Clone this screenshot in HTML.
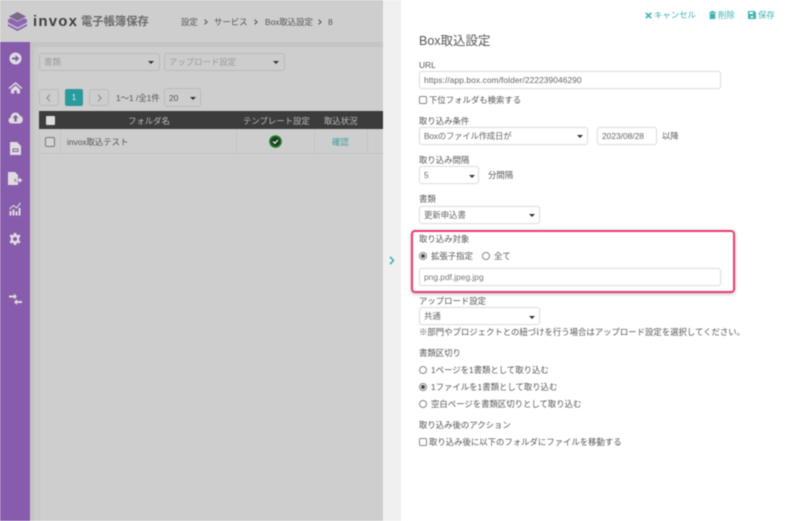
<!DOCTYPE html>
<html lang="ja"><head><meta charset="utf-8"><title>Box取込設定</title>
<style>
*{box-sizing:border-box}
html,body{margin:0;padding:0;width:800px;height:521px;overflow:hidden;background:#fff}
body{font-family:"Liberation Sans","Noto Sans CJK JP",sans-serif;color:#555;font-size:8.4px;position:relative}
#w{position:absolute;left:0;top:0;width:800px;height:521px;filter:blur(.4px);overflow:hidden}
.a{position:absolute}
.t{position:absolute;line-height:12px;white-space:nowrap}
.b{position:absolute;background:#fff;border:1px solid #e0e0e0;border-radius:3px;box-shadow:0 0 1px #ddd;line-height:16px;padding-left:4px;font-size:8.4px;white-space:nowrap}
.g{background:#cdcdcd;border-color:#bababa;box-shadow:none;color:#9a9a9a}
.c{position:absolute;width:0;height:0;border-left:3px solid transparent;border-right:3px solid transparent;border-top:3px solid #333}
.r{position:absolute;width:8px;height:8px;border:1px solid #888;border-radius:50%;background:#fff}
.r.on::after{content:"";position:absolute;left:1px;top:1px;width:4px;height:4px;border-radius:50%;background:#444}
.k{position:absolute;width:8px;height:8px;border:1px solid #888;border-radius:1.5px;background:#fff}
.teal{color:#3fb3b3}
svg{position:absolute;display:block}
</style></head><body><div id="w">
<!-- left dimmed -->
<div class="a" style="left:0;top:0;width:383px;height:521px;background:#cecece"></div>
<div class="a" style="left:30px;top:42px;width:353px;height:5px;background:#c4c4c4"></div>
<div class="a" style="left:30px;top:42px;width:4px;height:479px;background:#c4c4c4"></div>
<div class="a" style="left:34px;top:47px;width:5px;height:474px;background:#cbcbcb"></div>
<div class="a" style="left:0;top:42px;width:30px;height:479px;background:#885cad"></div>
<!-- logo -->
<svg style="left:8px;top:12px" width="19" height="19" viewBox="0 0 19 19"><path d="M9.500 0L18 4.500L9.500 9L1 4.500Z" fill="#7a6a8c"/><path d="M0 7.500L3 6.200L9.500 9.800L16 6.200L19 7.500V10.500L9.500 15.500L0 10.500Z" fill="#8e66b4"/><path d="M0 12L9.500 17L19 12V14L9.500 19L0 14Z" fill="#8a5fb0"/></svg>
<div class="t" style="left:33px;top:12px;font-size:15px;line-height:20px;font-weight:bold;color:#3f3f3f;letter-spacing:1.200px">invox</div>
<div class="t" style="left:81px;top:14px;font-size:11.300px;line-height:16px;font-weight:bold;color:#6a6a6a">電子帳簿保存</div>
<div class="t" style="left:181px;top:16px;color:#555">設定</div>
<svg style="left:204px;top:19px" width="4" height="6" viewBox="0 0 4 6"><path d="M.6 .6L3 3L.6 5.400" fill="none" stroke="#555" stroke-width="1.100"/></svg>
<div class="t" style="left:214px;top:16px;color:#555">サービス</div>
<svg style="left:254px;top:19px" width="4" height="6" viewBox="0 0 4 6"><path d="M.6 .6L3 3L.6 5.400" fill="none" stroke="#555" stroke-width="1.100"/></svg>
<div class="t" style="left:265px;top:16px;color:#555">Box取込設定</div>
<svg style="left:318px;top:19px" width="4" height="6" viewBox="0 0 4 6"><path d="M.6 .6L3 3L.6 5.400" fill="none" stroke="#555" stroke-width="1.100"/></svg>
<div class="t" style="left:328px;top:16px;color:#555">8</div>
<!-- sidebar icons -->
<svg style="left:9px;top:52px" width="13" height="13" viewBox="0 0 13 13"><circle cx="6.500" cy="6.500" r="6" fill="#ddd"/><path d="M3 5.500H6.500V3L10.300 6.500L6.500 10V7.500H3Z" fill="#885cad"/></svg>
<svg style="left:8px;top:81px" width="15" height="13" viewBox="0 0 15 13"><path d="M7.500 1L14.500 7L13.500 8L7.500 3L1.500 8L.5 7Z M3 8.500L7.500 4.500L12 8.500V12.500H8.800V9.500H6.200V12.500H3Z" fill="#ddd"/></svg>
<svg style="left:8px;top:111px" width="15" height="13" viewBox="0 0 15 13"><path d="M4 12.500C1.500 12.500 .5 10.800 .5 9.300C.5 7.800 1.500 6.800 2.700 6.500C2.700 3.500 5 1.500 7.500 1.500C9.800 1.500 11.300 3 11.800 4.800C13.500 5 14.800 6.500 14.800 8.500C14.800 10.800 13.300 12.500 11 12.500Z" fill="#ddd"/><path d="M7.500 3.800L10.500 7H8.700V10.500H6.300V7H4.500Z" fill="#885cad"/></svg>
<svg style="left:10px;top:142px" width="11" height="13" viewBox="0 0 11 13"><path d="M0 0H7L11 4V13H0Z" fill="#ddd"/><path d="M2.500 6.500H8.500V10H2.500Z" fill="#885cad"/><path d="M3.500 7.500H7.500V9H3.500Z" fill="#ddd"/></svg>
<svg style="left:8px;top:171px" width="15" height="15" viewBox="0 0 15 15"><path d="M0 1H7L10 4V8H6.500V10.500H10V14H0Z" fill="#ddd"/><path d="M7.500 8.300H11V6.500L14.500 9.300L11 12V10H7.500Z" fill="#ddd"/></svg>
<svg style="left:9px;top:202px" width="13" height="14" viewBox="0 0 13 14"><path d="M.5 9H2.500V13.500H.5Z M3.500 7.500H5.500V13.500H3.500Z M6.500 9.500H8.500V13.500H6.500Z M9.500 6H11.500V13.500H9.500Z" fill="#ddd"/><path d="M.5 7L4.500 3.500L7.500 6L11.500 1" fill="none" stroke="#ddd" stroke-width="1.100"/></svg>
<svg style="left:9px;top:233px" width="12" height="12" viewBox="0 0 12 12"><path d="M4.800 0H7.200L7.500 1.700L8.800 2.300L10.300 1.400L11.500 3.400L10.200 4.600V6.400V7.400L11.500 8.600L10.300 10.600L8.800 9.700L7.500 10.300L7.200 12H4.800L4.500 10.300L3.200 9.700L1.700 10.600L.5 8.600L1.800 7.400V4.600L.5 3.400L1.700 1.400L3.200 2.300L4.500 1.700Z" fill="#ddd"/><circle cx="6" cy="6" r="2" fill="#885cad"/></svg>
<svg style="left:9px;top:293px" width="13" height="13" viewBox="0 0 13 13"><path d="M0 2.500H5V.5L8 3.500L5 6.500V4.500H0Z M13 8H8V6L5 9L8 12V10H13Z" fill="#ddd"/><path d="M3.500 11L9.500 1.500" stroke="#885cad" stroke-width=".7"/></svg>
<!-- filters -->
<div class="b g" style="left:39px;top:53px;width:121px;height:18px">書類</div><div class="c" style="left:148px;top:61px"></div>
<div class="b g" style="left:164px;top:53px;width:121px;height:18px">アップロード設定</div><div class="c" style="left:273px;top:61px"></div>
<!-- pagination -->
<div class="b g" style="left:39px;top:89px;width:20px;height:17px"></div>
<svg style="left:46px;top:94px" width="5" height="8" viewBox="0 0 5 8"><path d="M4 .6L1 4L4 7.400" fill="none" stroke="#8a8a8a" stroke-width="1"/></svg>
<div class="a" style="left:65px;top:89px;width:18px;height:17px;background:#2a9a9c;border-radius:2px;color:#cfe;text-align:center;line-height:18px;font-size:8px">1</div>
<div class="b g" style="left:89px;top:89px;width:20px;height:17px"></div>
<svg style="left:97px;top:94px" width="5" height="8" viewBox="0 0 5 8"><path d="M1 .6L4 4L1 7.400" fill="none" stroke="#8a8a8a" stroke-width="1"/></svg>
<div class="t" style="left:116px;top:92px;color:#555">1〜1 /全1件</div>
<div class="b g" style="left:164px;top:88px;width:37px;height:19px;color:#555;line-height:18px">20</div><div class="c" style="left:190px;top:97px"></div>
<!-- table -->
<div class="a" style="left:39px;top:111px;width:344px;height:18px;background:#3c3c3c"></div>
<div class="a" style="left:46px;top:116px;width:9px;height:9px;background:#ddd;border-radius:1px"></div>
<div class="t" style="left:128px;top:115px;color:#bbb">フォルダ名</div>
<div class="t" style="left:243px;top:115px;color:#bbb">テンプレート設定</div>
<div class="t" style="left:324px;top:115px;color:#bbb">取込状況</div>
<div class="a" style="left:39px;top:153px;width:344px;height:1px;background:#c2c2c2"></div>
<div class="a" style="left:60px;top:129px;width:1px;height:25px;background:#c4c4c4"></div>
<div class="a" style="left:236px;top:129px;width:1px;height:25px;background:#c4c4c4"></div>
<div class="a" style="left:314px;top:129px;width:1px;height:25px;background:#c4c4c4"></div>
<div class="a" style="left:367px;top:129px;width:1px;height:25px;background:#c4c4c4"></div>
<div class="a" style="left:39px;top:129px;width:1px;height:392px;background:#c6c6c6"></div>
<div class="a" style="left:45px;top:137px;width:10px;height:10px;border:1px solid #777;border-radius:2px;background:#d4d4d4"></div>
<div class="t" style="left:67px;top:136px;color:#555">invox取込テスト</div>
<svg style="left:269px;top:135px" width="13" height="13" viewBox="0 0 13 13"><circle cx="6.500" cy="6.500" r="6.300" fill="#1c7a22"/><circle cx="6.500" cy="6.500" r="4.500" fill="#1d3a22"/><path d="M4 6.500L5.800 8.300L9 5" fill="none" stroke="#e8f5e8" stroke-width="1.300"/></svg>
<div class="t" style="left:332px;top:136px;color:#3a9c9c">確認</div>
<!-- strip -->
<div class="a" style="left:383px;top:0;width:18px;height:521px;background:#f0f0f0"></div>
<svg style="left:389px;top:256px" width="6" height="9" viewBox="0 0 6 9"><path d="M1 .8L4.500 4.500L1 8.200" fill="none" stroke="#35aeb0" stroke-width="1.500"/></svg>
<!-- actions -->
<svg style="left:645px;top:12px" width="7" height="7" viewBox="0 0 7 7"><path d="M.8 .8L6.200 6.200M6.200 .8L.8 6.200" stroke="#3fb3b3" stroke-width="1.700"/></svg>
<div class="t teal" style="left:654px;top:9px">キャンセル</div>
<svg style="left:709px;top:11px" width="7" height="8" viewBox="0 0 7 8"><path d="M0 1H2V0H5V1H7V2H0Z M.7 2.500H6.300V8H.7Z" fill="#3fb3b3"/></svg>
<div class="t teal" style="left:718px;top:9px">削除</div>
<svg style="left:748px;top:11px" width="8" height="8" viewBox="0 0 8 8"><path d="M0 0H6.500L8 1.500V8H0Z" fill="#3fb3b3"/><path d="M1.500 1H5V3H1.500Z M2.800 5H5.200V6.800H2.800Z" fill="#fff"/></svg>
<div class="t teal" style="left:758px;top:9px">保存</div>
<!-- form -->
<div class="t" style="left:419px;top:33px;font-size:12.500px;line-height:16px;color:#555">Box取込設定</div>
<div class="t" style="left:419px;top:59px">URL</div>
<div class="b" style="left:419px;top:71px;width:302px;height:18px;color:#666;letter-spacing:.08px">https://app.box.com/folder/222239046290</div>
<div class="k" style="left:419px;top:96px"></div>
<div class="t" style="left:429px;top:94px">下位フォルダも検索する</div>
<div class="t" style="left:419px;top:115px">取り込み条件</div>
<div class="b" style="left:419px;top:127px;width:169px;height:18px;color:#666;letter-spacing:-.2px">Boxのファイル作成日が</div><div class="c" style="left:577px;top:135px"></div>
<div class="b" style="left:597px;top:127px;width:60px;height:18px;color:#666">2023/08/28</div>
<div class="t" style="left:662px;top:130px">以降</div>
<div class="t" style="left:419px;top:154px">取り込み間隔</div>
<div class="b" style="left:419px;top:166px;width:60px;height:18px;color:#666">5</div><div class="c" style="left:469px;top:175px"></div>
<div class="t" style="left:488px;top:169px">分間隔</div>
<div class="t" style="left:419px;top:193px">書類</div>
<div class="b" style="left:419px;top:206px;width:121px;height:18px;color:#666">更新申込書</div><div class="c" style="left:529px;top:214px"></div>
<!-- highlight -->
<div class="a" style="left:411px;top:230px;width:324px;height:63px;border:2px solid #ee3b6c;border-radius:4px;box-shadow:0 1px 3px rgba(120,120,120,.5)"></div>
<div class="t" style="left:419px;top:233px">取り込み対象</div>
<div class="r on" style="left:419px;top:252px"></div>
<div class="t" style="left:431px;top:250px">拡張子指定</div>
<div class="r" style="left:482px;top:252px"></div>
<div class="t" style="left:494px;top:250px">全て</div>
<div class="b" style="left:419px;top:268px;width:302px;height:18px;color:#777">png.pdf.jpeg.jpg</div>
<div class="t" style="left:419px;top:295px">アップロード設定</div>
<div class="b" style="left:419px;top:307px;width:121px;height:18px;color:#666">共通</div><div class="c" style="left:529px;top:316px"></div>
<div class="t" style="left:419px;top:326px">※部門やプロジェクトとの紐づけを行う場合はアップロード設定を選択してください。</div>
<div class="t" style="left:419px;top:347px">書類区切り</div>
<div class="r" style="left:419px;top:366px"></div>
<div class="t" style="left:431px;top:364px">1ページを1書類として取り込む</div>
<div class="r on" style="left:419px;top:383px"></div>
<div class="t" style="left:431px;top:381px">1ファイルを1書類として取り込む</div>
<div class="r" style="left:419px;top:400px"></div>
<div class="t" style="left:431px;top:398px">空白ページを書類区切りとして取り込む</div>
<div class="t" style="left:419px;top:419px">取り込み後のアクション</div>
<div class="k" style="left:419px;top:438px"></div>
<div class="t" style="left:429px;top:436px">取り込み後に以下のフォルダにファイルを移動する</div>
</div></body></html>
